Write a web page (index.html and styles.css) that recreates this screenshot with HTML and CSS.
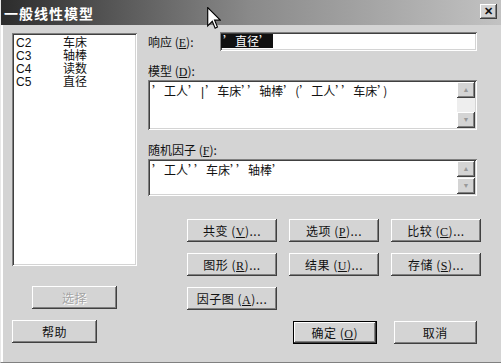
FILE: index.html
```html
<!DOCTYPE html>
<html>
<head>
    <meta charset="UTF-8">
    <title>一般线性模型</title>
    <link rel="stylesheet" href="styles.css">
</head>
<body>
    <div class="dialog">
        <div class="title-bar">
            <span class="title">一般线性模型</span>
            <div class="close-btn">✕</div>
        </div>

        <div class="dialog-body">
            <div class="left-col">
                <div class="listbox">
                    <div class="list-row"><span class="col-id">C2</span><span>车床</span></div>
                    <div class="list-row"><span class="col-id">C3</span><span>轴棒</span></div>
                    <div class="list-row"><span class="col-id">C4</span><span>读数</span></div>
                    <div class="list-row"><span class="col-id">C5</span><span>直径</span></div>
                </div>
                <div class="btn btn-select disabled">选择</div>
                <div class="btn btn-help">帮助</div>
            </div>

            <div class="right-col">
                <div class="response-row">
                    <span class="field-label">响应 (<u>E</u>):</span>
                    <div class="field"><span class="selected">’直径’</span></div>
                </div>

                <div class="field-label block-label model-label">模型 (<u>D</u>):</div>
                <div class="textbox model-box">
                    <div class="textbox-text">’工人’<span class="caret">|</span>’车床’’轴棒’(’工人’’车床’)</div>
                    <div class="scrollbar">
                        <div class="scroll-btn">▲</div>
                        <div class="scroll-track"></div>
                        <div class="scroll-btn">▼</div>
                    </div>
                </div>

                <div class="field-label block-label">随机因子 (<u>F</u>):</div>
                <div class="textbox random-box">
                    <div class="textbox-text">’工人’’车床’’轴棒’</div>
                    <div class="scrollbar">
                        <div class="scroll-btn">▲</div>
                        <div class="scroll-btn">▼</div>
                    </div>
                </div>

                <div class="btn-grid">
                    <div class="btn">共变 (<u>V</u>)...</div>
                    <div class="btn">选项 (<u>P</u>)...</div>
                    <div class="btn">比较 (<u>C</u>)...</div>
                    <div class="btn">图形 (<u>R</u>)...</div>
                    <div class="btn">结果 (<u>U</u>)...</div>
                    <div class="btn">存储 (<u>S</u>)...</div>
                    <div class="btn">因子图 (<u>A</u>)...</div>
                </div>

                <div class="ok-row">
                    <div class="btn btn-default">确定 (<u>O</u>)</div>
                    <div class="btn">取消</div>
                </div>
            </div>
        </div>

        <!-- pointeur de la souris -->
        <svg class="cursor" width="14" height="24" viewBox="0 0 12 21">
            <path d="M0.5 0.5 L0.5 16.5 L4.5 12.5 L7 18.5 L9 17.5 L6.5 11.5 L11.5 11.5 Z" fill="#fff" stroke="#000" stroke-width="1"/>
        </svg>
    </div>
</body>
</html>
```

FILE: styles.css
```css
* {
    margin: 0;
    padding: 0;
    box-sizing: border-box;
}

body {
    background-color: #d4d4d4;
    font-family: "Liberation Sans", "Noto Sans CJK SC", sans-serif;
    font-size: 12px;
    color: #111;
}

.dialog {
    position: relative;
    width: 501px;
    height: 363px;
    background-color: #d4d4d4;
    border-left: 1px solid #e8e8e8;
    border-bottom: 1px solid #808080;
    box-shadow: inset 2px 0 #fff;
    overflow: hidden;
}

/* Barre de titre */
.title-bar {
    height: 25px;
    display: flex;
    align-items: center;
    justify-content: space-between;
    padding: 0 4px 0 3px;
    background: linear-gradient(to right, #2c2c2c, #8a8a8a 50%, #c2c2c2);
}

.title {
    color: #fff;
    font-family: "Noto Sans CJK SC", sans-serif;
    font-size: 14px;
    font-weight: 700;
    letter-spacing: 1px;
}

.close-btn {
    width: 17px;
    height: 15px;
    margin-top: -2px;
    background: #d4d4d4;
    font-size: 11px;
    font-weight: 700;
    line-height: 15px;
    text-align: center;
    box-shadow: inset -1px -1px #404040, inset 1px 1px #fff, inset -2px -2px #808080;
}

/* Corps */
.dialog-body {
    display: flex;
    gap: 11px;
    padding: 7px 0 0 11px;
}

.left-col {
    width: 125px;
    display: flex;
    flex-direction: column;
}

.listbox {
    height: 233px;
    margin-top: 1px;
    background: #fff;
    padding: 4px 0 0 4px;
    box-shadow: inset 1px 1px #808080, inset -1px -1px #fff, inset 2px 2px #404040, inset -2px -2px #d4d4d4;
}

.list-row {
    display: flex;
    height: 13px;
    line-height: 13px;
}

.col-id {
    width: 47px;
}

.right-col {
    width: 329px;
    display: flex;
    flex-direction: column;
}

.field-label {
    font-family: "Noto Sans CJK SC", sans-serif;
    font-size: 12px;
}

.field-label u,
.btn u {
    font-family: "Liberation Serif", serif;
}

.response-row {
    display: flex;
    align-items: center;
    height: 19px;
}

.response-row .field-label {
    width: 72px;
}

.field {
    width: 257px;
    height: 19px;
    background: #fff;
    padding: 2px 0 0 1px;
    box-shadow: inset 1px 1px #808080, inset -1px -1px #fff, inset 2px 2px #404040, inset -2px -2px #d4d4d4;
}

.selected {
    display: inline-block;
    height: 14px;
    line-height: 14px;
    padding: 0 2px;
    background: #111;
    color: #fff;
    font-family: "Noto Sans CJK SC", sans-serif;
}

.block-label {
    height: 14px;
    line-height: 14px;
}

.model-label {
    margin-top: 13px;
}

.textbox {
    display: flex;
    margin-top: 2px;
    background: #fff;
    padding: 2px;
    box-shadow: inset 1px 1px #808080, inset -1px -1px #fff, inset 2px 2px #404040, inset -2px -2px #d4d4d4;
}

.model-box {
    height: 50px;
    margin-bottom: 13px;
}

.random-box {
    height: 37px;
}

.textbox-text {
    flex: 1;
    padding: 1px 2px;
    font-family: "Noto Sans CJK SC", sans-serif;
    line-height: 15px;
    white-space: pre;
    overflow: hidden;
}

.caret {
    font-family: "Liberation Sans", sans-serif;
    margin: 0 1px;
}

.scrollbar {
    width: 18px;
    display: flex;
    flex-direction: column;
    justify-content: space-between;
    background: #eee;
}

.scroll-btn {
    height: 16px;
    background: #d4d4d4;
    color: #999;
    font-size: 7px;
    line-height: 16px;
    text-align: center;
    box-shadow: inset -1px -1px #404040, inset 1px 1px #fff, inset -2px -2px #808080;
}

.scroll-track {
    flex: 1;
}

/* Boutons */
.btn {
    height: 23px;
    background: #d4d4d4;
    font-family: "Noto Sans CJK SC", sans-serif;
    font-size: 12px;
    line-height: 23px;
    text-align: center;
    letter-spacing: 0.5px;
    box-shadow: inset -1px -1px #404040, inset 1px 1px #fff, inset -2px -2px #808080;
}

.btn.disabled {
    color: #a4a4a4;
    text-shadow: 1px 1px #fff;
}

.btn-select {
    width: 85px;
    margin: 20px 0 0 20px;
}

.btn-help {
    width: 85px;
    margin-top: 11px;
}

.btn-grid {
    display: grid;
    grid-template-columns: repeat(3, 90px);
    grid-auto-rows: 23px;
    column-gap: 12px;
    row-gap: 11px;
    margin: 23px 0 0 39px;
}

.ok-row {
    display: flex;
    gap: 17px;
    margin: 11px 0 0 145px;
}

.ok-row .btn {
    width: 84px;
}

.btn-default {
    box-shadow: inset 0 0 0 1px #000, inset -2px -2px #404040, inset 2px 2px #fff, inset -3px -3px #808080;
}

.cursor {
    position: absolute;
    left: 206px;
    top: 7px;
}
```
